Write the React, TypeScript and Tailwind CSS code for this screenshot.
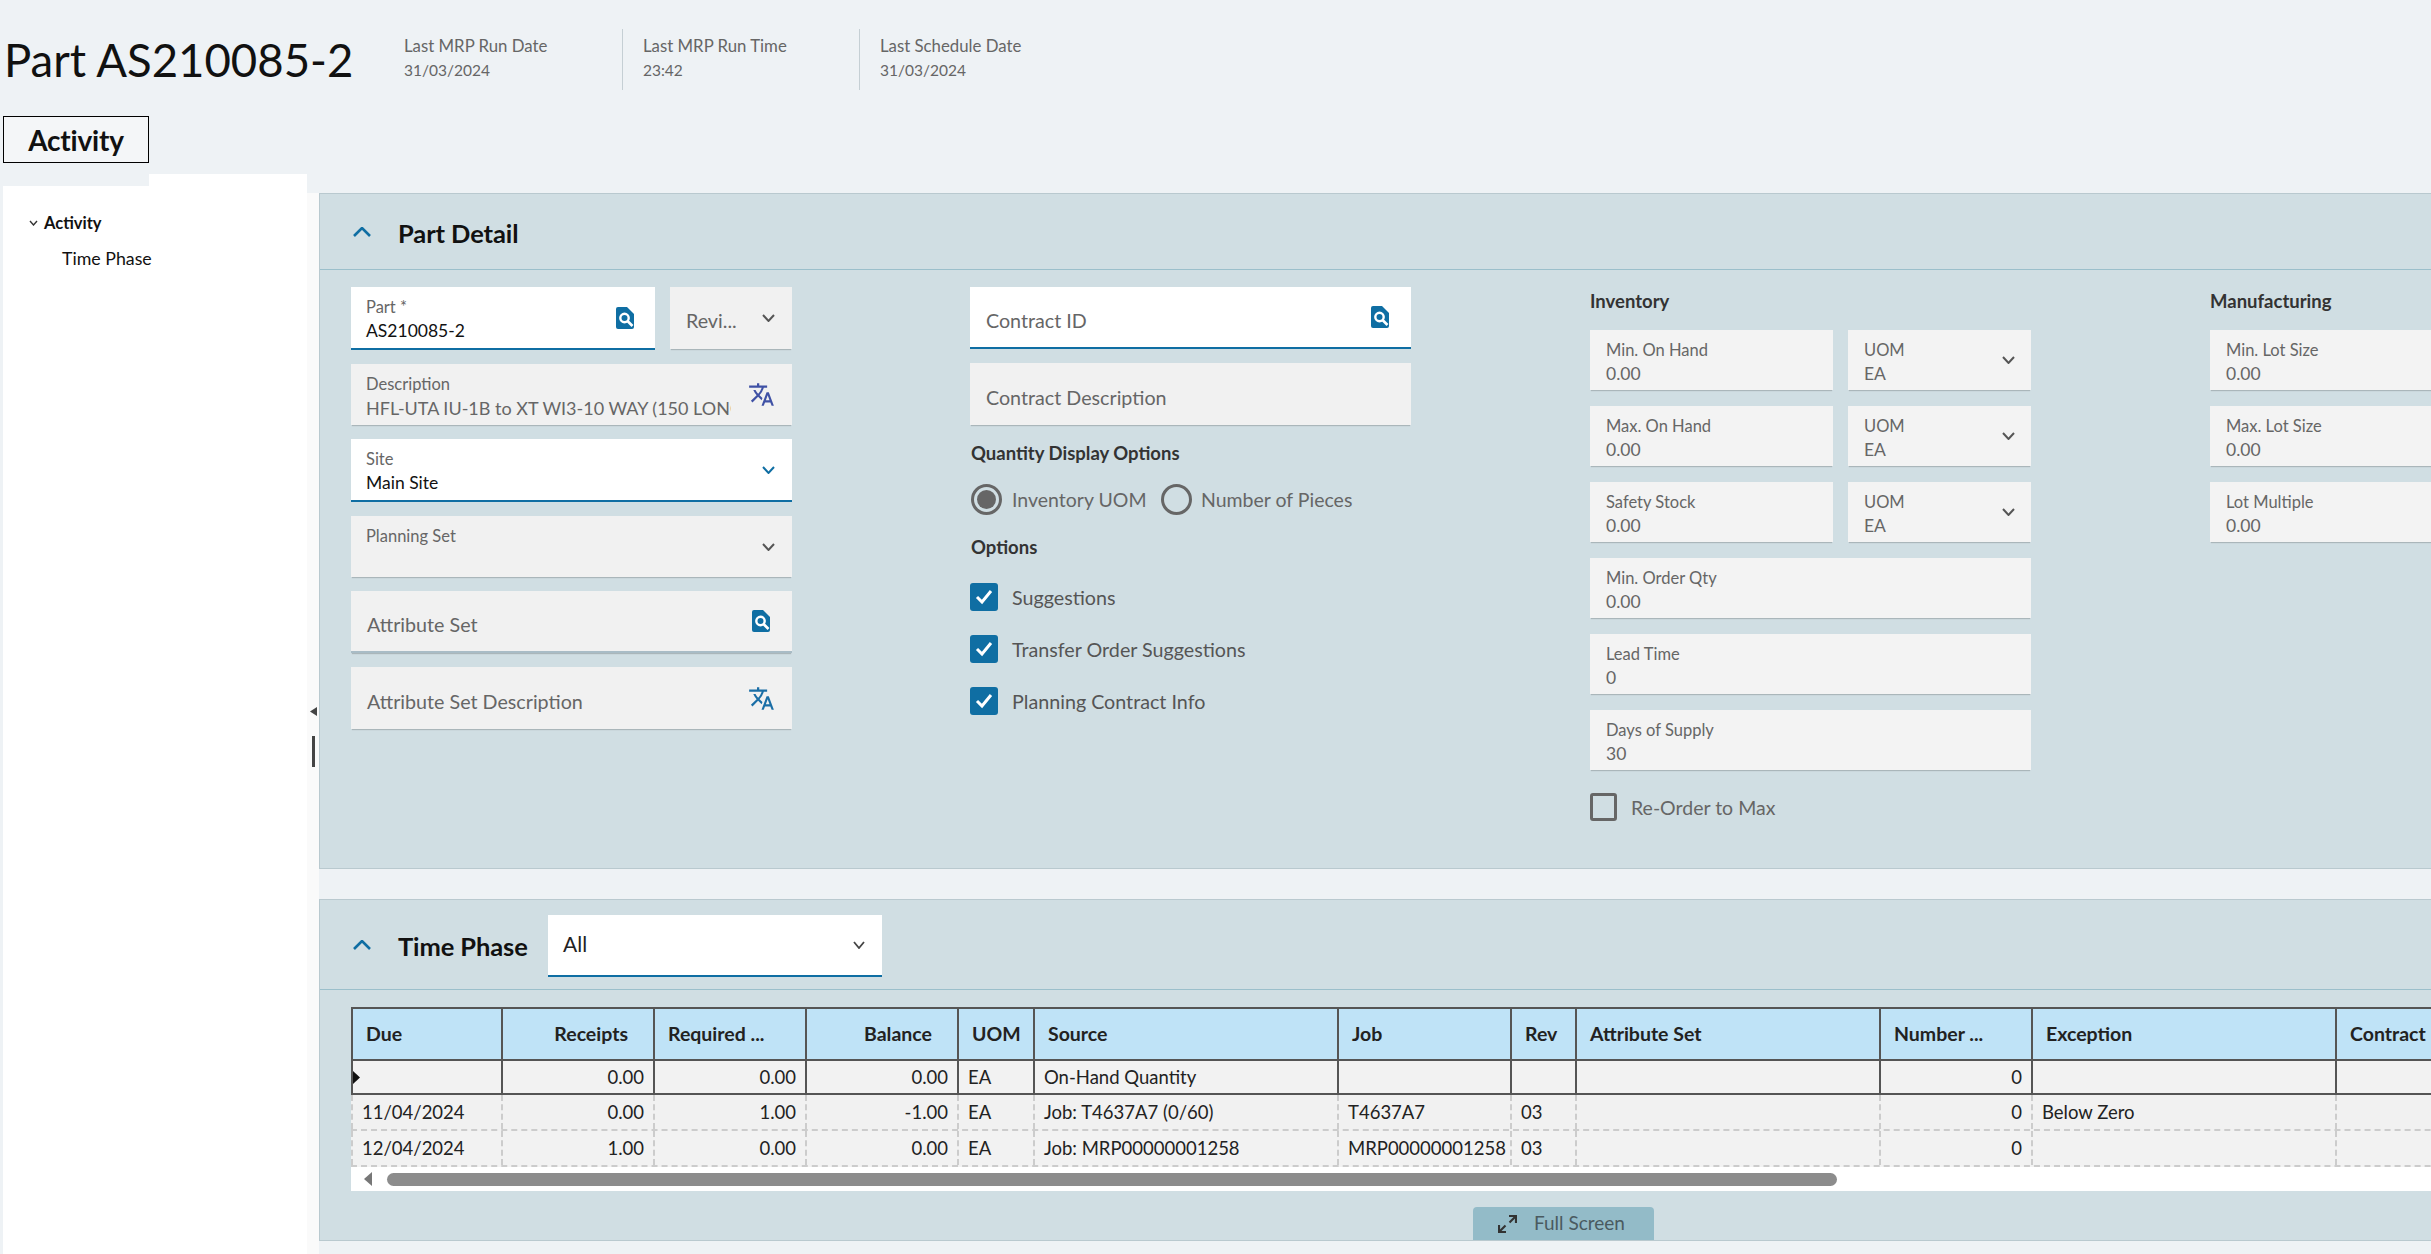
import React from "react";
import { MdTranslate } from "react-icons/md";

const BLUE = "#0f6ea3";

function Chev({ dir = "down", color = "#555", w = 13, h = 8, sw = 2 }: { dir?: "down" | "up"; color?: string; w?: number; h?: number; sw?: number }) {
  const pts = dir === "down" ? `1,1 ${w / 2},${h - 1} ${w - 1},1` : `1,${h - 1} ${w / 2},1 ${w - 1},${h - 1}`;
  return (
    <svg width={w} height={h} viewBox={`0 0 ${w} ${h}`} className="shrink-0">
      <polyline points={pts} fill="none" stroke={color} strokeWidth={sw} />
    </svg>
  );
}

function Lookup() {
  return (
    <svg width="18" height="22" viewBox="0 0 18 22" className="shrink-0">
      <path d="M2 0H11L18 7V20Q18 22 16 22H2Q0 22 0 20V2Q0 0 2 0Z" fill={BLUE} />
      <circle cx="8.5" cy="11" r="4.2" fill="none" stroke="#fff" strokeWidth="2.4" />
      <line x1="11.5" y1="14" x2="16.5" y2="19" stroke="#fff" strokeWidth="2.6" />
    </svg>
  );
}

function Check() {
  return (
    <span className="w-[28px] h-[28px] rounded-[3px] bg-[#0f6ea3] flex items-center justify-center shrink-0">
      <svg width="18" height="16" viewBox="0 0 18 16">
        <polyline points="2,8 7,13 16,2" fill="none" stroke="#fff" strokeWidth="3" />
      </svg>
    </span>
  );
}

function Field({
  label,
  value,
  white,
  line,
  right,
  cls,
  dark,
  clip,
}: {
  label?: string;
  value?: string;
  white?: boolean;
  line?: string;
  right?: React.ReactNode;
  cls: string;
  dark?: boolean;
  clip?: boolean;
}) {
  return (
    <div
      className={`${cls} flex items-center justify-between shrink-0 ${white ? "bg-white" : "bg-[#f1f1f1] shadow-[0_2px_1px_-1px_rgba(0,0,0,0.18)]"} ${
        line === "blue" ? "border-b-2 border-[#0f6ea3]" : line === "grey" ? "border-b-2 border-[#a9bcc6]" : ""
      }`}
    >
      <div className="pl-[15px] self-stretch pt-[10px] min-w-0 flex-1">
        <div className="text-[16.5px] leading-[20px] text-[#666] whitespace-nowrap">{label}</div>
        <div
          className={`leading-[24px] mt-[2px] whitespace-nowrap ${clip ? "w-[365px] overflow-hidden text-[18px]" : "text-[17.5px]"} ${dark ? "text-[#111]" : "text-[#666]"}`}
        >
          {value ?? " "}
        </div>
      </div>
      {right}
    </div>
  );
}

function Placeholder({ text, white, line, right, pr }: { text: string; white?: boolean; line?: string; right?: React.ReactNode; pr?: string }) {
  return (
    <div
      className={`w-[441px] h-[62px] shrink-0 flex items-center justify-between pl-[16px] ${pr ?? "pr-[17px]"} ${white ? "bg-white" : "bg-[#f1f1f1] shadow-[0_2px_1px_-1px_rgba(0,0,0,0.18)]"} ${
        line === "blue" ? "border-b-2 border-[#0f6ea3]" : line === "grey" ? "border-b-2 border-[#a9bcc6]" : ""
      }`}
    >
      <span className="text-[19.7px] text-[#666] pt-[8px] leading-[24px]">{text}</span>
      {right}
    </div>
  );
}

function NumField({ label, value, cls }: { label: string; value: string; cls: string }) {
  return (
    <div className={`${cls} h-[60px] bg-[#f3f3f3] shadow-[0_2px_1px_-1px_rgba(0,0,0,0.18)] pl-[16px] pt-[10px] shrink-0`}>
      <div className="text-[16.5px] leading-[20px] text-[#666] whitespace-nowrap">{label}</div>
      <div className="text-[17.5px] leading-[24px] mt-[2px] text-[#666]">{value}</div>
    </div>
  );
}

function UomField() {
  return (
    <div className="w-[183px] h-[60px] bg-[#f3f3f3] shadow-[0_2px_1px_-1px_rgba(0,0,0,0.18)] pl-[16px] pr-[16px] shrink-0 flex items-center justify-between">
      <div className="self-stretch pt-[10px]">
        <div className="text-[16.5px] leading-[20px] text-[#666]">UOM</div>
        <div className="text-[17.5px] leading-[24px] mt-[2px] text-[#666]">EA</div>
      </div>
      <Chev />
    </div>
  );
}

const gridCols = "grid grid-cols-[152px_152px_152px_152px_76px_304px_173px_65px_304px_152px_304px_304px] w-max";

const headers: [string, "l" | "r"][] = [
  ["Due", "l"],
  ["Receipts", "r"],
  ["Required ...", "l"],
  ["Balance", "r"],
  ["UOM", "l"],
  ["Source", "l"],
  ["Job", "l"],
  ["Rev", "l"],
  ["Attribute Set", "l"],
  ["Number ...", "l"],
  ["Exception", "l"],
  ["Contract", "l"],
];

const aligns = ["l", "r", "r", "r", "l", "l", "l", "l", "l", "r", "l", "l"];

const rows = [
  ["", "0.00", "0.00", "0.00", "EA", "On-Hand Quantity", "", "", "", "0", "", ""],
  ["11/04/2024", "0.00", "1.00", "-1.00", "EA", "Job: T4637A7 (0/60)", "T4637A7", "03", "", "0", "Below Zero", ""],
  ["12/04/2024", "1.00", "0.00", "0.00", "EA", "Job: MRP00000001258", "MRP00000001258", "03", "", "0", "", ""],
];

export default function App() {
  return (
    <div className="w-[2431px] h-[1254px] overflow-hidden bg-[#eef2f5] [font-family:Lato,sans-serif] flex flex-col">
      {/* title strip */}
      <div className="h-[116px] shrink-0 flex items-start pt-[29px]">
        <div className="w-[404px] shrink-0 pl-[4px] h-[61px] flex items-center text-[45.5px] leading-[50px] text-[#111] whitespace-nowrap">Part AS210085-2</div>
        <div className="w-[218px] h-[61px] pt-[7px] text-[#666] shrink-0">
          <div className="text-[16.8px] leading-[20px]">Last MRP Run Date</div>
          <div className="text-[15.5px] leading-[20px] mt-[4px]">31/03/2024</div>
        </div>
        <div className="w-[237px] h-[61px] pt-[7px] pl-[20px] border-l border-[#c5cfd4] text-[#666] shrink-0">
          <div className="text-[16.8px] leading-[20px]">Last MRP Run Time</div>
          <div className="text-[15.5px] leading-[20px] mt-[4px]">23:42</div>
        </div>
        <div className="h-[61px] pt-[7px] pl-[20px] border-l border-[#c5cfd4] text-[#666] shrink-0">
          <div className="text-[16.8px] leading-[20px]">Last Schedule Date</div>
          <div className="text-[15.5px] leading-[20px] mt-[4px]">31/03/2024</div>
        </div>
      </div>

      {/* tab */}
      <div className="h-[58px] shrink-0 pl-[3px]">
        <div className="w-[146px] h-[47px] border border-black flex items-center justify-center text-[28px] font-bold tracking-[-0.2px] leading-none text-[#111] bg-[#f4f6f8]">Activity</div>
      </div>

      {/* body */}
      <div className="flex-1 flex min-h-0">
        {/* sidebar */}
        <div className="ml-[3px] w-[304px] shrink-0 flex flex-col">
          <div className="h-[12px] shrink-0 flex">
            <div className="w-[146px]" />
            <div className="flex-1 bg-white" />
          </div>
          <div className="flex-1 bg-white pt-[27px] text-[#111]">
            <div className="flex items-center h-[20px] text-[16.5px]">
              <span className="ml-[26px] w-[15px] flex">
                <Chev w={9} h={6} sw={1.4} color="#333" />
              </span>
              <span className="font-bold">Activity</span>
            </div>
            <div className="mt-[15px] ml-[59px] leading-[20px] text-[17.8px]">Time Phase</div>
          </div>
        </div>
        {/* splitter */}
        <div className="mt-[19px] w-[12px] shrink-0 bg-[#fafafa] flex flex-col items-center pt-[514px]">
          <svg width="7" height="9" viewBox="0 0 7 9">
            <polygon points="7,0 7,9 0,4.5" fill="#444" />
          </svg>
          <div className="w-[3px] h-[31px] bg-[#444] mt-[20px]" />
        </div>

        {/* main */}
        <div className="flex-1 min-w-0 mt-[19px] flex flex-col">
          {/* Part Detail */}
          <div className="h-[676px] shrink-0 bg-[#d0dee3] border-l border-t border-b border-[#b9c9cf]">
            <div className="h-[76px] border-b border-[#9bbfcb] flex items-center pl-[33px]">
              <Chev dir="up" color={BLUE} w={18} h={10} sw={2.6} />
              <span className="ml-[27px] pt-[3px] text-[25.5px] font-bold text-[#111] tracking-[-0.1px]">Part Detail</span>
            </div>
            <div className="pt-[17px] pl-[31px] grid grid-cols-[619px_620px_620px_620px] w-max">
              {/* col 1 */}
              <div className="flex flex-col gap-[14px]">
                <div className="flex gap-[15px]">
                  <Field cls="w-[304px] h-[63px] pr-[21px]" white line="blue" label="Part *" value="AS210085-2" dark right={<Lookup />} />
                  <div className="w-[122px] h-[62px] bg-[#f1f1f1] shadow-[0_2px_1px_-1px_rgba(0,0,0,0.18)] flex items-center justify-between pl-[16px] pr-[17px] shrink-0">
                    <span className="text-[19.7px] text-[#666] pt-[6px] leading-[24px]">Revi...</span>
                    <Chev />
                  </div>
                </div>
                <Field cls="w-[441px] h-[61px] pr-[17px]" label="Description" value="HFL-UTA IU-1B to XT WI3-10 WAY (150 LONG) TO SUIT" clip right={<MdTranslate size={27} color="#3f51a5" className="shrink-0" />} />
                <Field cls="w-[441px] h-[63px] pr-[17px]" white line="blue" label="Site" value="Main Site" dark right={<Chev color={BLUE} />} />
                <Field cls="w-[441px] h-[61px] pr-[17px]" label="Planning Set" right={<Chev />} />
                <Placeholder text="Attribute Set" line="grey" pr="pr-[22px]" right={<Lookup />} />
                <Placeholder text="Attribute Set Description" right={<MdTranslate size={27} color="#1a6ea6" className="shrink-0" />} />
              </div>
              {/* col 2 */}
              <div className="flex flex-col w-[441px]">
                <Placeholder text="Contract ID" white line="blue" pr="pr-[22px]" right={<Lookup />} />
                <div className="mt-[14px]">
                  <Placeholder text="Contract Description" />
                </div>
                <div className="mt-[16px] text-[18.5px] leading-[24px] font-bold text-[#333] pl-[1px]">Quantity Display Options</div>
                <div className="mt-[19px] flex items-center h-[31px] pl-[1px] text-[#666] text-[19.5px]">
                  <span className="w-[31px] h-[31px] rounded-full border-[3px] border-[#666] flex items-center justify-center shrink-0">
                    <span className="w-[19px] h-[19px] rounded-full bg-[#666]" />
                  </span>
                  <span className="ml-[10px] w-[149px] whitespace-nowrap">Inventory UOM</span>
                  <span className="w-[31px] h-[31px] rounded-full border-[3px] border-[#666] shrink-0" />
                  <span className="ml-[9px] whitespace-nowrap">Number of Pieces</span>
                </div>
                <div className="mt-[20px] text-[18.5px] leading-[24px] font-bold text-[#333] pl-[1px]">Options</div>
                <div className="mt-[24px] flex flex-col gap-[24px] text-[19.7px] text-[#555]">
                  <div className="flex items-center gap-[14px] h-[28px]"><Check /><span className="pt-[2px]">Suggestions</span></div>
                  <div className="flex items-center gap-[14px] h-[28px]"><Check /><span className="pt-[2px]">Transfer Order Suggestions</span></div>
                  <div className="flex items-center gap-[14px] h-[28px]"><Check /><span className="pt-[2px]">Planning Contract Info</span></div>
                </div>
              </div>
              {/* col 3 */}
              <div className="flex flex-col w-[441px] gap-[16px]">
                <div className="text-[18.5px] leading-[27px] pt-[1px] h-[27px] font-bold text-[#333]">Inventory</div>
                <div className="flex gap-[15px]"><NumField cls="w-[243px]" label="Min. On Hand" value="0.00" /><UomField /></div>
                <div className="flex gap-[15px]"><NumField cls="w-[243px]" label="Max. On Hand" value="0.00" /><UomField /></div>
                <div className="flex gap-[15px]"><NumField cls="w-[243px]" label="Safety Stock" value="0.00" /><UomField /></div>
                <NumField cls="w-[441px]" label="Min. Order Qty" value="0.00" />
                <NumField cls="w-[441px]" label="Lead Time" value="0" />
                <NumField cls="w-[441px]" label="Days of Supply" value="30" />
                <div className="flex items-center gap-[14px] mt-[7px] h-[28px]">
                  <span className="w-[27px] h-[28px] rounded-[3px] border-[3px] border-[#666] shrink-0" />
                  <span className="text-[19.5px] text-[#666] pt-[2px]">Re-Order to Max</span>
                </div>
              </div>
              {/* col 4 */}
              <div className="flex flex-col w-[441px] gap-[16px]">
                <div className="text-[18.5px] leading-[27px] pt-[1px] h-[27px] font-bold text-[#333]">Manufacturing</div>
                <NumField cls="w-[441px]" label="Min. Lot Size" value="0.00" />
                <NumField cls="w-[441px]" label="Max. Lot Size" value="0.00" />
                <NumField cls="w-[441px]" label="Lot Multiple" value="0.00" />
              </div>
            </div>
          </div>

          <div className="h-[30px] shrink-0" />

          {/* Time Phase */}
          <div className="h-[342px] shrink-0 bg-[#d0dee3] border-l border-t border-b border-[#b9c9cf]">
            <div className="h-[90px] border-b border-[#9bbfcb] flex items-center pl-[33px]">
              <Chev dir="up" color={BLUE} w={18} h={10} sw={2.6} />
              <span className="ml-[27px] pt-[3px] w-[150px] text-[25.5px] font-bold text-[#111] tracking-[-0.1px] whitespace-nowrap">Time Phase</span>
              <div className="w-[334px] h-[62px] mt-[3px] bg-white border-b-2 border-[#0f6ea3] flex items-center justify-between pl-[15px] pr-[17px]">
                <span className="text-[21px] text-[#222] pb-[2px]">All</span>
                <Chev color="#444" w={12} h={8} sw={1.8} />
              </div>
            </div>
            <div className="pt-[17px] pl-[31px]">
              <div className={`${gridCols} h-[54px] bg-[#bfe3f7] border-t-2 border-b-2 border-[#555]`}>
                {headers.map(([h, a], i) => (
                  <div key={i} className={`border-r-2 border-[#555] flex items-center text-[19.5px] font-bold text-[#222] whitespace-nowrap ${a === "r" ? "justify-end pr-[25px]" : "pl-[13px]"} ${i === 0 ? "border-l-2" : ""}`}>
                    {h}
                  </div>
                ))}
              </div>
              {rows.map((r, ri) => (
                <div key={ri} className={`${gridCols} ${ri === 0 ? "h-[34px] bg-[#f2f2f2] border-b-2 border-[#555]" : ri === 1 ? "h-[36px] bg-[#f1f1f1] border-b-2 border-dashed border-[#ccc]" : "h-[36px] bg-[#f2f2f2] border-b-2 border-dashed border-[#ccc]"}`}>
                  {r.map((c, i) => (
                    <div
                      key={i}
                      className={`flex items-center pt-[1px] text-[18.5px] text-[#222] whitespace-nowrap ${ri === 0 ? "border-r-2 border-[#555]" : "border-r-2 border-dashed border-[#ccc]"} ${i === 0 ? (ri === 0 ? "border-l-2 border-[#555]" : "border-l-2 border-dashed border-[#ccc]") : ""} ${aligns[i] === "r" ? "justify-end pr-[9px]" : "pl-[9px]"}`}
                    >
                      {ri === 0 && i === 0 ? (
                        <svg width="7" height="13" viewBox="0 0 7 13" className="-ml-[9px]">
                          <polygon points="0,0 7,6.5 0,13" fill="#111" />
                        </svg>
                      ) : (
                        c
                      )}
                    </div>
                  ))}
                </div>
              ))}
              <div className="h-[24px] bg-white flex items-center pl-[13px]">
                <svg width="8" height="14" viewBox="0 0 8 14">
                  <polygon points="8,0 8,14 0,7" fill="#777" />
                </svg>
                <div className="ml-[15px] w-[1450px] h-[13px] rounded-full bg-[#8c8c8c]" />
              </div>
              <div className="mt-[16px] ml-[1122px] w-[181px] h-[33px] bg-[#93bbc8] rounded-t-[4px] flex items-center pl-[25px] text-[19px] text-[#4a5a60]">
                <svg width="19" height="18" viewBox="0 0 19 18" className="shrink-0">
                  <g fill="none" stroke="#333" strokeWidth="2.2">
                    <polyline points="1,10 1,17 8,17" />
                    <line x1="1" y1="17" x2="7.5" y2="10.5" />
                    <polyline points="11,1 18,1 18,8" />
                    <line x1="18" y1="1" x2="11.5" y2="7.5" />
                  </g>
                </svg>
                <span className="ml-[17px] whitespace-nowrap">Full Screen</span>
              </div>
            </div>
          </div>
        </div>
      </div>
    </div>
  );
}
